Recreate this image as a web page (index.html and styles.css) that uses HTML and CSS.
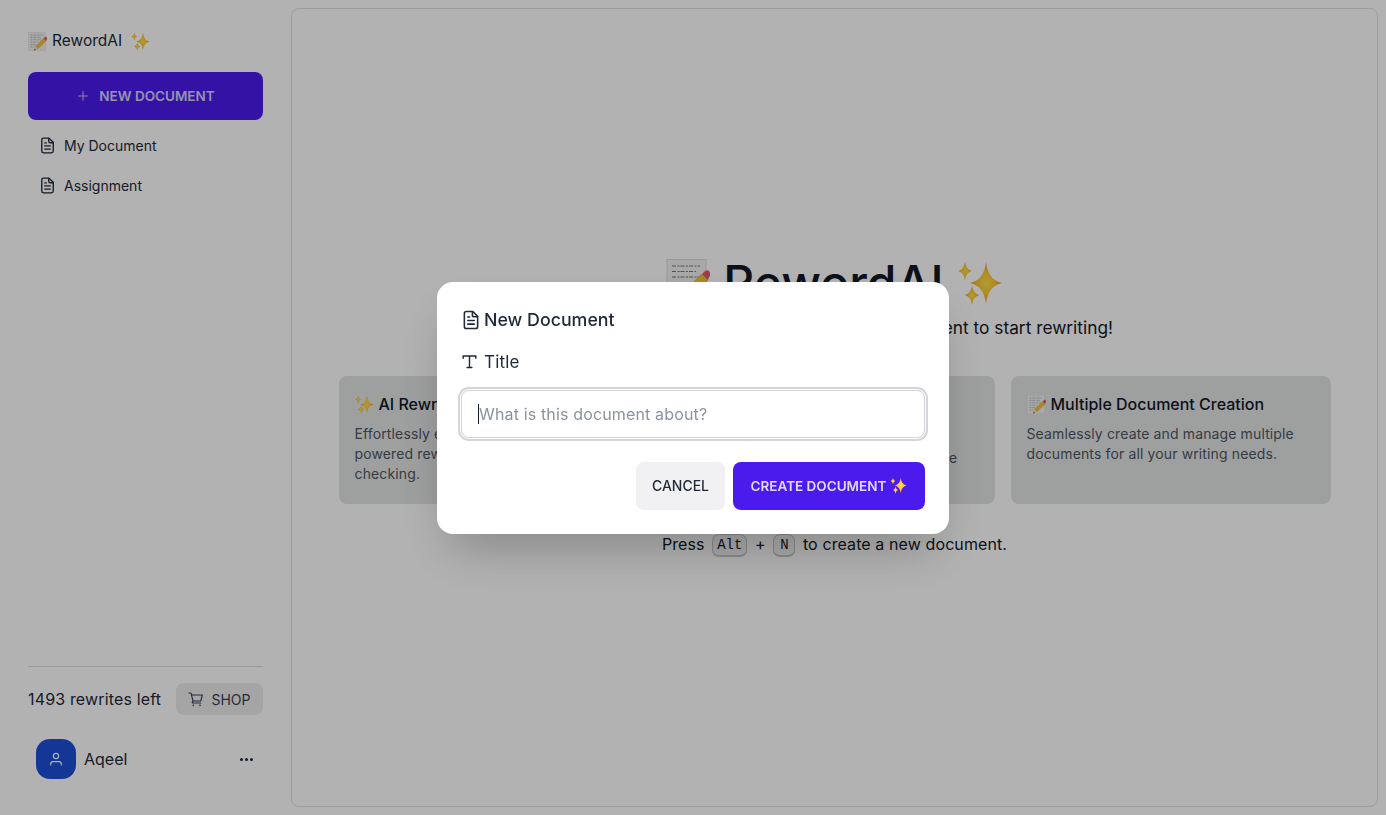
FILE: index.html
```html
<!DOCTYPE html>
<html lang="en">
<head>
    <meta charset="UTF-8">
    <title>RewordAI</title>
    <link rel="stylesheet" href="styles.css">
</head>
<body>

    <!-- shared icons -->
    <svg class="defs" aria-hidden="true">
        <defs>
            <radialGradient id="gold">
                <stop offset="0" stop-color="#ffe04a"/>
                <stop offset="0.55" stop-color="#fbc531"/>
                <stop offset="1" stop-color="#f0902c"/>
            </radialGradient>
        </defs>
        <symbol id="sparkle" viewBox="0 0 46 46">
            <path fill="url(#gold)" d="M29 2Q31 20 45 23Q31 26 29 44Q27 26 13 23Q27 20 29 2Z"/>
            <path fill="url(#gold)" d="M8 2Q9 9 14.500 11Q9 13 8 20Q7 13 1.500 11Q7 9 8 2Z"/>
            <path fill="url(#gold)" d="M15 26Q16 33 22 35Q16 37 15 45Q14 37 8 35Q14 33 15 26Z"/>
        </symbol>
        <symbol id="memo" viewBox="0 0 44 44">
            <rect x="1" y="0.500" width="39" height="43" fill="#f1f1f1" stroke="#dcdcdc"/>
            <path fill="none" stroke="#555" stroke-width="0.800" stroke-dasharray="4 1.500 2 1" d="M6 7h28M6 12.500h24M6 18h27M6 23.500h18M6 29h12M6 34.500h8"/>
            <path fill="#f6c12f" stroke="#d99a1e" stroke-width="0.600" d="M17 33 36 15l6 6-19 18z"/>
            <path fill="#e2566a" d="M36 15l3-3c1.500-1 3-1 4 0l1 2c.6 1.500.3 3-1 4l-1 3z"/>
            <path fill="#f0d6a8" d="M17 33l6 6-9 4z"/>
            <path fill="#444" d="M15.500 38.800 18 41.200l-4 1.800z"/>
        </symbol>
        <symbol id="file" viewBox="0 0 24 24">
            <g fill="none" stroke="currentColor" stroke-width="1.700" stroke-linecap="round" stroke-linejoin="round">
                <path d="M14 2.750H7A2.250 2.250 0 0 0 4.750 5v14A2.250 2.250 0 0 0 7 21.250h10A2.250 2.250 0 0 0 19.250 19V8z"/>
                <path d="M13.500 3v3.500a2 2 0 0 0 2 2H19M8.500 12.500h7M8.500 16.500h7M8.500 8.750h2"/>
            </g>
        </symbol>
    </svg>

    <aside class="sidebar">
        <div class="brand">
            <svg class="emoji-sm"><use href="#memo"/></svg>
            RewordAI
            <svg class="emoji-sm brand-spark"><use href="#sparkle"/></svg>
        </div>

        <button class="new-doc">
            <svg class="plus" viewBox="0 0 24 24" fill="none" stroke="currentColor" stroke-width="1.500" stroke-linecap="round"><path d="M12 4.500v15m7.500-7.500h-15"/></svg>
            NEW DOCUMENT
        </button>

        <nav class="doc-list">
            <a class="doc-link"><svg class="doc-icon"><use href="#file"/></svg>My Document</a>
            <a class="doc-link"><svg class="doc-icon"><use href="#file"/></svg>Assignment</a>
        </nav>

        <div class="sidebar-foot">
            <div class="credits">
                <span>1493 rewrites left</span>
                <button class="shop">
                    <svg class="cart" viewBox="0 0 24 24" fill="none" stroke="currentColor" stroke-width="1.700" stroke-linecap="round" stroke-linejoin="round"><path d="M1.500 3h2.200c.5 0 .9.350 1 .850L7.500 15h11.700l2.300-9H5.400"/><path d="M7.500 15 6.400 17c-.3.600.1 1 .7 1h12"/><circle cx="8" cy="21.500" r=".5"/><circle cx="18" cy="21.500" r=".5"/></svg>
                    SHOP
                </button>
            </div>
            <div class="user">
                <span class="avatar">
                    <svg viewBox="0 0 24 24" fill="none" stroke="currentColor" stroke-width="1.500" stroke-linecap="round" stroke-linejoin="round"><circle cx="12" cy="8" r="3.500"/><path d="M5 20v-1.500a3 3 0 0 1 3-3h8a3 3 0 0 1 3 3V20"/></svg>
                </span>
                <span class="user-name">Aqeel</span>
                <span class="dots"><i></i><i></i><i></i></span>
            </div>
        </div>
    </aside>

    <main class="main">
        <h1 class="hero-title">
            <svg class="hero-memo"><use href="#memo"/></svg>
            RewordAI
            <svg class="hero-sparkle"><use href="#sparkle"/></svg>
        </h1>
        <p class="hero-sub">Create a new document or select an old document to start rewriting!</p>

        <div class="cards">
            <div class="card">
                <h3><svg class="emoji-sm"><use href="#sparkle"/></svg>AI Rewriting</h3>
                <p>Effortlessly enhance your writing with AI-powered rewriting and advanced grammar checking.</p>
            </div>
            <div class="card card-mid">
                <h3>Smart Suggestions</h3>
                <p>Improve your writing with clear tips<br>that keep each phrase clear and simple</p>
            </div>
            <div class="card">
                <h3><svg class="emoji-sm"><use href="#memo"/></svg>Multiple Document Creation</h3>
                <p>Seamlessly create and manage multiple documents for all your writing needs.</p>
            </div>
        </div>

        <p class="hint">Press <kbd>Alt</kbd> + <kbd>N</kbd> to create a new document.</p>
    </main>

    <div class="overlay">
        <div class="modal">
            <h2 class="modal-title">
                <svg class="modal-icon"><use href="#file"/></svg>
                New Document
            </h2>
            <label class="field-label">
                <svg class="title-icon" viewBox="0 0 24 24" fill="none" stroke="currentColor" stroke-width="1.800" stroke-linecap="round" stroke-linejoin="round"><path d="M4 8V5h16v3M12 5v14.500M9 19.500h6"/></svg>
                Title
            </label>
            <div class="input"><span class="caret"></span>What is this document about?</div>
            <div class="modal-actions">
                <button class="btn-cancel">CANCEL</button>
                <button class="btn-create">CREATE DOCUMENT<svg class="emoji-sm"><use href="#sparkle"/></svg></button>
            </div>
        </div>
    </div>

</body>
</html>
```

FILE: styles.css
```css
* {
    box-sizing: border-box;
}

body {
    margin: 0;
    height: 815px;
    display: flex;
    overflow: hidden;
    background: #fff;
    color: #1f2937;
    font-family: Inter, "Noto Sans", sans-serif;
    font-size: 16px;
}

button {
    font-family: inherit;
    border: 0;
}

/* holds the symbols only, has to stay rendered or the gradient is lost */
.defs {
    position: absolute;
    width: 0;
    height: 0;
}

.emoji-sm {
    width: 19px;
    height: 19px;
    flex: none;
}

/* sidebar */

.sidebar {
    width: 291px;
    flex: none;
    display: flex;
    flex-direction: column;
    padding: 29px 28px 36px 28px;
}

.brand {
    display: flex;
    align-items: center;
    gap: 5px;
    font-size: 15.500px;
    line-height: 24px;
    color: #1f2937;
}

.brand-spark {
    margin-left: 4px;
}

.new-doc {
    height: 48px;
    margin-top: 19px;
    display: flex;
    align-items: center;
    justify-content: center;
    gap: 9px;
    background: #4a1bec;
    color: #d9d2fc;
    border-radius: 8px;
    font-size: 13.500px;
    font-weight: 600;
}

.plus {
    width: 14px;
    height: 14px;
}

.doc-list {
    margin-top: 5px;
    display: flex;
    flex-direction: column;
}

.doc-link {
    height: 40px;
    display: flex;
    align-items: center;
    gap: 7px;
    padding-left: 10px;
    font-size: 14px;
}

.doc-icon {
    width: 19px;
    height: 19px;
}

.sidebar-foot {
    margin-top: auto;
    border-top: 1px solid #dcdee3;
    padding-top: 16px;
}

.credits {
    display: flex;
    align-items: center;
    justify-content: space-between;
    font-size: 16px;
    letter-spacing: 0.150px;
}

.shop {
    height: 32px;
    width: 87px;
    display: flex;
    align-items: center;
    justify-content: center;
    gap: 7px;
    background: #ededee;
    color: #374151;
    border-radius: 8px;
    font-size: 14px;
    letter-spacing: 0;
}

.cart {
    width: 16px;
    height: 16px;
}

.user {
    margin-top: 24px;
    display: flex;
    align-items: center;
    padding: 0 10px 0 8px;
    height: 40px;
}

.avatar {
    width: 40px;
    height: 40px;
    display: flex;
    align-items: center;
    justify-content: center;
    background: #1d4ed8;
    color: #fff;
    border-radius: 14px;
}

.avatar svg {
    width: 18px;
    height: 18px;
}

.user-name {
    margin-left: 8px;
    font-size: 16px;
}

.dots {
    margin-left: auto;
    display: flex;
    gap: 2px;
}

.dots i {
    width: 3px;
    height: 3px;
    border-radius: 50%;
    background: #1f2937;
}

/* main panel */

.main {
    flex: none;
    width: 1087px;
    height: 799px;
    margin-top: 8px;
    padding-bottom: 3px;
    border: 1px solid #e0e1e4;
    border-radius: 8px;
    display: flex;
    flex-direction: column;
    align-items: center;
    justify-content: center;
}

.hero-title {
    margin: 0;
    display: flex;
    align-items: center;
    gap: 13px;
    font-size: 48px;
    line-height: 56px;
    font-weight: 500;
    color: #111827;
}

.hero-memo {
    width: 44px;
    height: 44px;
    margin-bottom: 4px;
}

.hero-sparkle {
    width: 46px;
    height: 46px;
}

.hero-sub {
    margin: 5px 0 0;
    font-size: 17.300px;
    line-height: 24px;
    letter-spacing: 0.010px;
    color: #111827;
}

.cards {
    margin-top: 36px;
    display: flex;
    gap: 16px;
}

.card {
    width: 320px;
    height: 128px;
    padding: 16px;
    background: #e3e5e4;
    border-radius: 8px;
}

.card h3 {
    margin: 0 0 8px;
    display: flex;
    align-items: center;
    gap: 5px;
    font-size: 16px;
    line-height: 24px;
    font-weight: 500;
    color: #111827;
}

.card p {
    margin: 0;
    font-size: 14px;
    line-height: 20px;
    letter-spacing: 0.130px;
    color: #4b5563;
}

.card-mid p {
    padding: 4px 0 0 2px;
    white-space: nowrap;
}

.hint {
    margin: 28px 0 0;
    font-size: 16px;
    line-height: 24px;
    letter-spacing: 0.100px;
    color: #111827;
}

kbd {
    display: inline-block;
    min-width: 22px;
    margin: 0 3px;
    padding: 0 4px;
    text-align: center;
    vertical-align: 1px;
    font-family: "Liberation Mono", monospace;
    font-size: 14px;
    line-height: 20px;
    letter-spacing: 0;
    background: #f3f3f3;
    border: 1px solid #c6c6c6;
    border-bottom-width: 2px;
    border-radius: 7px;
}

/* new document dialog */

.overlay {
    position: fixed;
    top: 0;
    left: 0;
    right: 0;
    bottom: 0;
    display: flex;
    align-items: center;
    justify-content: center;
    background: rgba(0, 0, 0, 0.3);
}

.modal {
    width: 512px;
    height: 252px;
    padding: 24px;
    background: #fff;
    border-radius: 16px;
    box-shadow: 0 25px 50px -12px rgba(0, 0, 0, 0.25);
}

.modal-title {
    margin: 0;
    height: 28px;
    padding-top: 1px;
    display: flex;
    align-items: center;
    gap: 2px;
    font-size: 17.800px;
    line-height: 28px;
    font-weight: 500;
    color: #1f2937;
}

.modal-icon {
    width: 22px;
    height: 22px;
    margin-left: -1px;
}

.field-label {
    margin-top: 16px;
    display: flex;
    align-items: center;
    gap: 5px;
    font-size: 17px;
    line-height: 24px;
    letter-spacing: 0.200px;
}

.title-icon {
    width: 19px;
    height: 19px;
    margin-left: -1px;
}

.input {
    margin-top: 16px;
    height: 48px;
    display: flex;
    align-items: center;
    padding-left: 16px;
    border: 1px solid #d1d3d8;
    border-radius: 8px;
    box-shadow: 0 0 0 1px #fff, 0 0 0 3px #d5d5d8;
    color: #8b92a0;
    font-size: 16px;
    letter-spacing: 0.150px;
}

.caret {
    width: 1px;
    height: 20px;
    background: #111827;
}

.modal-actions {
    margin-top: 24px;
    display: flex;
    justify-content: flex-end;
    gap: 8px;
}

.btn-cancel,
.btn-create {
    height: 48px;
    border-radius: 8px;
    font-size: 14px;
    font-weight: 500;
}

.btn-cancel {
    width: 89px;
    background: #f1f1f3;
    color: #1f2937;
}

.btn-create {
    width: 192px;
    display: flex;
    align-items: center;
    justify-content: center;
    gap: 4px;
    background: #4a1bec;
    color: #e0daff;
    font-size: 13.500px;
    font-weight: 600;
}

.btn-create .emoji-sm {
    width: 17px;
    height: 17px;
}
```
